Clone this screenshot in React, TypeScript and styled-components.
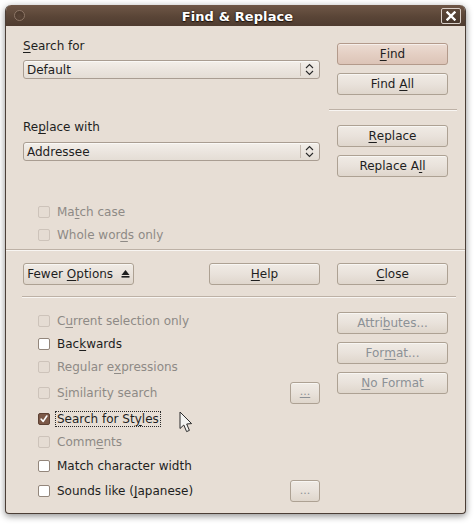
import React from 'react';
import styled, { createGlobalStyle } from 'styled-components';

const Global = createGlobalStyle`
  html, body { margin: 0; padding: 0; background: #ffffff; }
  body { font-family: "DejaVu Sans", "Liberation Sans", sans-serif; font-size: 12px; color: #1e1e1e; }
`;

const Page = styled.div`
  position: relative;
  width: 475px;
  height: 524px;
  padding: 5px 0 0 5px;
  box-sizing: border-box;
`;

const Window = styled.div`
  width: 461px;
  height: 509px;
  box-sizing: border-box;
  border: 1px solid #4b3e36;
  border-top: none;
  border-radius: 6px 6px 4px 4px;
  overflow: hidden;
  display: flex;
  flex-direction: column;
  background: #e7ded5;
  box-shadow: 0 2px 7px rgba(0, 0, 0, 0.45);
`;

const TitleBar = styled.div`
  height: 21px;
  flex: none;
  display: grid;
  grid-template-columns: 1fr auto 1fr;
  align-items: center;
  padding: 0 5px 0 9px;
  margin: 0 -1px;
  background: linear-gradient(#6f5747, #5a4537 55%, #4f3c30);
  border-radius: 6px 6px 0 0;
`;

const Orb = styled.div`
  width: 9px;
  height: 9px;
  border-radius: 50%;
  border: 1px solid #8d7667;
  background: radial-gradient(circle at 50% 60%, #5a4537, #4a372b);
`;

const Title = styled.div`
  font-weight: bold;
  font-size: 13px;
  color: #ffffff;
  text-shadow: 0 0 2px #1e140e, 0 1px 1px #1e140e;
  letter-spacing: 0.1px;
  padding-top: 1px;
`;

const CloseBox = styled.div`
  justify-self: end;
  width: 18px;
  height: 14px;
  border: 1px solid #d9cfc8;
  border-radius: 2px;
  background: linear-gradient(#5e4839, #47362b);
  display: flex;
  align-items: center;
  justify-content: center;
`;

const Body = styled.div`
  flex: 1;
  display: flex;
  flex-direction: column;
`;

const Columns = styled.div<{ $top?: number }>`
  display: grid;
  grid-template-columns: 297px 111px;
  column-gap: 17px;
  padding-left: 17px;
  margin-top: ${p => p.$top ?? 0}px;
`;

const Col = styled.div`
  display: flex;
  flex-direction: column;
`;

const Label = styled.div<{ $top: number }>`
  line-height: 16px;
  height: 16px;
  margin-top: ${p => p.$top}px;
`;

const Combo = styled.div<{ $top: number }>`
  margin-top: ${p => p.$top}px;
  height: 19px;
  box-sizing: border-box;
  border: 1px solid #a99d92;
  border-radius: 3px;
  background: linear-gradient(#f3efea, #ece6e0 45%, #e4ddd5);
  display: flex;
  align-items: center;
  padding-left: 3px;
  box-shadow: inset 0 1px 0 rgba(255, 255, 255, 0.6);
`;

const ComboText = styled.span`
  flex: 1;
  line-height: 16px;
`;

const Spin = styled.div`
  width: 17px;
  height: 13px;
  border-left: 1px solid #c5bab0;
  margin-right: 1px;
  display: flex;
  align-items: center;
  justify-content: center;
`;

const Button = styled.div<{ $top?: number; $default?: boolean; $disabled?: boolean; $w?: number }>`
  margin-top: ${p => p.$top ?? 0}px;
  width: ${p => p.$w ?? 111}px;
  height: 22px;
  box-sizing: border-box;
  border: 1px solid ${p => (p.$default ? '#b39a8b' : '#ada193')};
  border-radius: 3px;
  background: ${p =>
    p.$default
      ? 'linear-gradient(#ecdcd2, #e4cfc3 50%, #dcc4b7)'
      : 'linear-gradient(#f0ebe5, #e9e2db 50%, #dfd6cc)'};
  box-shadow: inset 0 1px 0 rgba(255, 255, 255, 0.55);
  display: flex;
  align-items: center;
  justify-content: center;
  line-height: 16px;
  padding-bottom: 1px;
  color: ${p => (p.$disabled ? '#8c9196' : '#1e1e1e')};
`;

const ButtonLabel = styled.span`
  white-space: pre;
  display: inline-flex;
  align-items: center;
`;

const Mn = styled.span`
  text-decoration: underline;
  text-underline-offset: 2px;
  text-decoration-thickness: 1px;
`;

const Separator = styled.div<{ $top: number; $l?: number; $r?: number }>`
  margin-top: ${p => p.$top}px;
  margin-left: ${p => p.$l ?? 0}px;
  margin-right: ${p => p.$r ?? 0}px;
  height: 0;
  border-top: 1px solid #bdb1a6;
  border-bottom: 1px solid #f8f5f2;
`;

const CheckRow = styled.div<{ $h: number; $top?: number }>`
  height: ${p => p.$h}px;
  margin-top: ${p => p.$top ?? 0}px;
  display: flex;
  align-items: center;
  padding-left: 15px;
`;

const Box = styled.div<{ $state: 'on' | 'off' | 'disabled' }>`
  width: 12px;
  height: 12px;
  box-sizing: border-box;
  flex: none;
  border-radius: 2px;
  border: 1px solid ${p => (p.$state === 'disabled' ? '#cdc3ba' : p.$state === 'on' ? '#5d4133' : '#93867b')};
  background: ${p => (p.$state === 'disabled' ? '#e5dcd3' : p.$state === 'on' ? '#7b5847' : '#ffffff')};
  display: flex;
  align-items: center;
  justify-content: center;
  margin-right: 7px;
`;

const CheckText = styled.span<{ $disabled?: boolean; $focus?: boolean }>`
  line-height: 14px;
  color: ${p => (p.$disabled ? '#8e8a86' : '#1e1e1e')};
  outline: ${p => (p.$focus ? '1px dotted #2a2a2a' : 'none')};
  outline-offset: 0px;
  padding: 0 1px 0 0;
  margin-left: ${p => (p.$focus ? -1 : 0)}px;
  padding-left: ${p => (p.$focus ? 1 : 0)}px;
`;

const Spacer = styled.div`
  flex: 1;
`;

const DotsButton = styled(Button)`
  color: #8c9196;
  font-size: 11px;
`;

const ButtonRow = styled.div`
  display: flex;
  justify-content: space-between;
`;

const Cursor = styled.svg`
  position: absolute;
  left: 179px;
  top: 411px;
`;

const Check: React.FC<{ state: 'on' | 'off' | 'disabled' }> = ({ state }) => (
  <Box $state={state}>
    {state === 'on' && (
      <svg width="8" height="8" viewBox="0 0 8 8">
        <path d="M1.2 4.2 L3.2 6.4 L6.8 1" stroke="#ffffff" strokeWidth="1.6" fill="none" strokeLinecap="round" strokeLinejoin="round" />
      </svg>
    )}
  </Box>
);

const SpinIcon = () => (
  <svg width="9" height="13" viewBox="0 0 9 13">
    <path d="M1 5 L4.5 1.5 L8 5" stroke="#2a2a2a" strokeWidth="1.1" fill="none" />
    <path d="M1 8 L4.5 11.5 L8 8" stroke="#2a2a2a" strokeWidth="1.1" fill="none" />
  </svg>
);

type Opt = { label: React.ReactNode; state: 'on' | 'off' | 'disabled'; h: number; dots?: boolean; focus?: boolean };

const options: Opt[] = [
  { label: <>C<Mn>u</Mn>rrent selection only</>, state: 'disabled', h: 23 },
  { label: <>Bac<Mn>k</Mn>wards</>, state: 'off', h: 23 },
  { label: <>Regular e<Mn>x</Mn>pressions</>, state: 'disabled', h: 23 },
  { label: <>S<Mn>i</Mn>milarity search</>, state: 'disabled', h: 29, dots: true },
  { label: <>Search for St<Mn>y</Mn>les</>, state: 'on', h: 23, focus: true },
  { label: <>Comm<Mn>e</Mn>nts</>, state: 'disabled', h: 23 },
  { label: <>Match character width</>, state: 'off', h: 26 },
  { label: <>Sounds like (<Mn>J</Mn>apanese)</>, state: 'off', h: 24, dots: true },
];

export default function App() {
  return (
    <>
      <Global />
      <Page>
        <Window>
          <TitleBar>
            <Orb />
            <Title>Find &amp; Replace</Title>
            <CloseBox>
              <svg width="10" height="10" viewBox="0 0 10 10">
                <path d="M1.5 1.5 L8.5 8.5 M8.5 1.5 L1.5 8.5" stroke="#ffffff" strokeWidth="2.4" strokeLinecap="square" />
              </svg>
            </CloseBox>
          </TitleBar>
          <Body>
            <Columns>
              <Col>
                <Label $top={12}><Mn>S</Mn>earch for</Label>
                <Combo $top={6}>
                  <ComboText>Default</ComboText>
                  <Spin><SpinIcon /></Spin>
                </Combo>
                <Label $top={40}>Re<Mn>p</Mn>lace with</Label>
                <Combo $top={7}>
                  <ComboText>Addressee</ComboText>
                  <Spin><SpinIcon /></Spin>
                </Combo>
                <CheckRow $h={23} $top={39}>
                  <Check state="disabled" />
                  <CheckText $disabled>Ma<Mn>t</Mn>ch case</CheckText>
                </CheckRow>
                <CheckRow $h={23}>
                  <Check state="disabled" />
                  <CheckText $disabled>Whole wor<Mn>d</Mn>s only</CheckText>
                </CheckRow>
              </Col>
              <Col>
                <Button $top={17} $default><ButtonLabel><Mn>F</Mn>ind</ButtonLabel></Button>
                <Button $top={8}><ButtonLabel>Find <Mn>A</Mn>ll</ButtonLabel></Button>
                <Separator $top={14} $l={-8} $r={-9} />
                <Button $top={14}><ButtonLabel><Mn>R</Mn>eplace</ButtonLabel></Button>
                <Button $top={8}><ButtonLabel>Replace A<Mn>l</Mn>l</ButtonLabel></Button>
              </Col>
            </Columns>

            <Separator $top={3} />

            <Columns $top={12}>
              <ButtonRow>
                <Button>
                  <ButtonLabel>
                    Fewer <Mn>O</Mn>ptions{'  '}
                    <svg width="9" height="9" viewBox="0 0 9 9">
                      <path d="M0.5 6 L4.5 1 L8.5 6 Z" fill="#1e1e1e" />
                      <rect x="0.5" y="7" width="8" height="1.6" fill="#1e1e1e" />
                    </svg>
                  </ButtonLabel>
                </Button>
                <Button><ButtonLabel><Mn>H</Mn>elp</ButtonLabel></Button>
              </ButtonRow>
              <Button><ButtonLabel><Mn>C</Mn>lose</ButtonLabel></Button>
            </Columns>

            <Separator $top={11} $l={16} $r={9} />

            <Columns $top={11}>
              <Col>
                {options.map((o, i) => (
                  <CheckRow key={i} $h={o.h}>
                    <Check state={o.state} />
                    <CheckText $disabled={o.state === 'disabled'} $focus={o.focus}>{o.label}</CheckText>
                    <Spacer />
                    {o.dots && (
                      <DotsButton $w={30}>
                        <ButtonLabel>{i === 3 ? <Mn>...</Mn> : '...'}</ButtonLabel>
                      </DotsButton>
                    )}
                  </CheckRow>
                ))}
              </Col>
              <Col>
                <Button $top={3} $disabled><ButtonLabel>Attri<Mn>b</Mn>utes...</ButtonLabel></Button>
                <Button $top={8} $disabled><ButtonLabel>For<Mn>m</Mn>at...</ButtonLabel></Button>
                <Button $top={8} $disabled><ButtonLabel><Mn>N</Mn>o Format</ButtonLabel></Button>
              </Col>
            </Columns>
          </Body>
        </Window>
        <Cursor width="14" height="24" viewBox="0 0 14 24">
          <path d="M1 1 L1 17.5 L4.8 14 L7.6 20.6 L10.4 19.4 L7.7 13 L12.6 12.6 Z" fill="#f4f4f2" stroke="#2b2b2b" strokeWidth="1" strokeLinejoin="round" />
        </Cursor>
      </Page>
    </>
  );
}
